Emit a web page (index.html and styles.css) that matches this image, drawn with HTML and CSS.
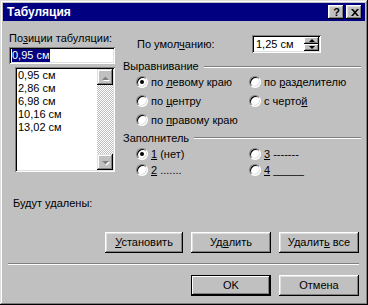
FILE: index.html
```html
<!DOCTYPE html>
<html lang="ru">
<head>
<meta charset="utf-8">
<title>Табуляция</title>
<link rel="stylesheet" href="styles.css">
</head>
<body>
<div class="window">
  <div class="titlebar">
    <span class="title">Табуляция</span>
    <div class="caps">
      <span class="cap help">?</span>
      <span class="cap close"><svg width="8" height="7" viewBox="0 0 8 7"><path d="M0 0h2l2 2.2L6 0h2L5 3.5 8 7H6L4 4.8 2 7H0l3-3.5z" fill="#000"/></svg></span>
    </div>
  </div>
  <div class="body">
    <div class="top">
      <div class="left">
        <div class="lbl">По<u>з</u>иции табуляции:</div>
        <div class="field"><span class="sel">0,95 см</span></div>
        <div class="list">
          <div class="items">
            <div>0,95 см</div>
            <div>2,86 см</div>
            <div>6,98 см</div>
            <div>10,16 см</div>
            <div>13,02 см</div>
          </div>
          <div class="vscroll">
            <div class="sbtn"><svg width="12" height="12" viewBox="0 0 12 12"><polygon points="3,9 10,9 6.5,5.5" fill="#fff" transform="translate(1 1)"/><polygon points="3,9 10,9 6.5,5.5" fill="#808080"/></svg></div>
            <div class="track"></div>
            <div class="sbtn"><svg width="12" height="12" viewBox="0 0 12 12"><polygon points="3,5 10,5 6.5,8.5" fill="#fff" transform="translate(1 1)"/><polygon points="3,5 10,5 6.5,8.5" fill="#808080"/></svg></div>
          </div>
        </div>
        <div class="removed">Будут удалены:</div>
      </div>
      <div class="right">
        <div class="default-row">
          <span class="dlabel">По умол<u>ч</u>анию:</span>
          <div class="spin">
            <span class="spin-val">1,25 см</span>
            <div class="spin-btns">
              <span class="sb"><span class="tri-up"></span></span>
              <span class="sb"><span class="tri-down"></span></span>
            </div>
          </div>
        </div>
        <div class="group-head"><span>Выравнивание</span><span class="etch"></span></div>
        <div class="options align">
          <div class="opt"><span class="radio on"></span><span>по <u>л</u>евому краю</span></div>
          <div class="opt"><span class="radio"></span><span>по <u>р</u>азделителю</span></div>
          <div class="opt"><span class="radio"></span><span>по <u>ц</u>ентру</span></div>
          <div class="opt"><span class="radio"></span><span>с черто<u>й</u></span></div>
          <div class="opt"><span class="radio"></span><span>по <u>п</u>равому краю</span></div>
        </div>
        <div class="group-head fill-head"><span>Заполнитель</span><span class="etch"></span></div>
        <div class="options fill">
          <div class="opt"><span class="radio on"></span><span><u>1</u> (нет)</span></div>
          <div class="opt"><span class="radio"></span><span><u>3</u> -------</span></div>
          <div class="opt"><span class="radio"></span><span><u>2</u> .......</span></div>
          <div class="opt"><span class="radio"></span><span><u>4</u> _____</span></div>
        </div>
      </div>
    </div>
    <div class="actions">
      <div class="btn w78"><span><u>У</u>становить</span></div>
      <div class="btn"><span>Уд<u>а</u>лить</span></div>
      <div class="btn"><span>Удалит<u>ь</u> все</span></div>
    </div>
    <div class="sep"></div>
    <div class="footer">
      <div class="btn default"><span>OK</span></div>
      <div class="btn"><span>Отмена</span></div>
    </div>
  </div>
</div>
</body>
</html>
```

FILE: styles.css
```css
* { box-sizing: border-box; }
html, body { margin: 0; padding: 0; }
body {
  font-family: "Liberation Sans", Arial, sans-serif;
  font-size: 11px;
  color: #000;
  background: #c0c0c0;
}
u { text-decoration: underline; text-underline-offset: 1px; }

.window {
  width: 368px;
  height: 305px;
  background: #c0c0c0;
  padding: 3px;
  box-shadow: inset -1px -1px #000, inset 1px 1px #dfdfdf,
              inset -2px -2px #808080, inset 2px 2px #fff;
}

.titlebar {
  height: 18px;
  background: #000080;
  display: flex;
  align-items: center;
  justify-content: space-between;
  padding: 0 3px 0 4px;
}
.title { color: #fff; font-weight: bold; font-size: 12px; line-height: 14px; }
.caps { display: flex; gap: 2px; }
.cap {
  width: 16px; height: 14px;
  background: #c0c0c0;
  display: flex; align-items: center; justify-content: center;
  box-shadow: inset -1px -1px #000, inset 1px 1px #fff,
              inset -2px -2px #808080, inset 2px 2px #dfdfdf;
}
.help { font-weight: bold; font-size: 11px; line-height: 12px; padding-left: 1px; }
.close svg { display: block; margin-left: 1px; }

.body { display: flex; flex-direction: column; }

.top { display: flex; padding: 11px 0 0 6px; gap: 8px; align-items: flex-start; }
.left { width: 106px; display: flex; flex-direction: column; }
.lbl { line-height: 13px; height: 13px; }

.field {
  margin-top: 2px;
  height: 17px;
  background: #fff;
  padding: 2px 3px;
  box-shadow: inset 1px 1px #808080, inset -1px -1px #fff,
              inset 2px 2px #000, inset -2px -2px #dfdfdf;
  line-height: 13px;
}
.sel { background: #000080; color: #fff; display: inline-block; height: 13px; }

.list {
  margin: 3px 0 0 6px;
  width: 100px;
  height: 105px;
  background: #fff;
  padding: 2px;
  display: flex;
  box-shadow: inset 1px 1px #808080, inset -1px -1px #fff,
              inset 2px 2px #000, inset -2px -2px #dfdfdf;
}
.items { flex: 1; padding-left: 1px; line-height: 13px; }
.vscroll { width: 16px; display: flex; flex-direction: column; }
.sbtn {
  width: 16px; height: 16px; background: #c0c0c0;
  box-shadow: inset -1px -1px #000, inset 1px 1px #dfdfdf,
              inset -2px -2px #808080, inset 2px 2px #fff;
  display: flex; align-items: center; justify-content: center;
}
.sbtn svg { display: block; }
.track {
  flex: 1;
  background: repeating-conic-gradient(#c0c0c0 0% 25%, #fff 0% 50%) 0 0 / 2px 2px;
}

.removed { margin: 24.5px 0 0 4px; line-height: 13px; }

.right { width: 238px; margin-top: 3px; display: flex; flex-direction: column; }
.default-row { display: flex; align-items: center; height: 18px; padding-left: 14px; }
.dlabel { width: 115px; line-height: 13px; }
.spin {
  width: 69px; height: 18px;
  background: #fff;
  padding: 2px;
  display: flex; align-items: center;
  box-shadow: inset 1px 1px #808080, inset -1px -1px #fff,
              inset 2px 2px #000, inset -2px -2px #dfdfdf;
}
.spin-val { flex: 1; padding-left: 2px; line-height: 13px; }
.spin-btns { width: 15px; height: 14px; display: flex; flex-direction: column; }
.sb {
  flex: 1; background: #c0c0c0;
  display: flex; align-items: center; justify-content: center;
  box-shadow: inset -1px -1px #000, inset 1px 1px #fff,
              inset -2px -2px #808080;
}
.tri-up { width: 0; height: 0; border-left: 3px solid transparent; border-right: 3px solid transparent; border-bottom: 3px solid #000; }
.tri-down { width: 0; height: 0; border-left: 3px solid transparent; border-right: 3px solid transparent; border-top: 3px solid #000; }

.group-head { display: flex; align-items: center; margin-top: 7px; line-height: 13px; height: 13px; }
.fill-head { margin-top: 2.5px; }
.etch { flex: 1; margin-left: 5px; height: 2px; border-top: 1px solid #808080; border-bottom: 1px solid #fff; }

.options { display: grid; grid-template-columns: 113px 1fr; padding-left: 13px; }
.align { grid-auto-rows: 18px; row-gap: 1px; }
.fill { grid-auto-rows: 16px; margin-top: 1.5px; }
.opt { display: flex; align-items: center; line-height: 13px; white-space: nowrap; }

.radio {
  width: 12px; height: 12px;
  border-radius: 50%;
  border: 1px solid;
  border-color: #808080 #fff #fff #808080;
  background: #fff;
  box-shadow: inset 1px 1px #000, inset -1px -1px #dfdfdf;
  margin-right: 3px;
  display: flex; align-items: center; justify-content: center;
  flex: none;
}
.radio.on::after { content: ""; width: 4px; height: 4px; border-radius: 50%; background: #000; }

.actions { display: flex; justify-content: flex-end; gap: 8px; padding-right: 6px; margin-top: 22.5px; }
.btn {
  width: 80px; height: 21px;
  background: #c0c0c0;
  display: flex; align-items: center; justify-content: center;
  line-height: 13px;
  box-shadow: inset -1px -1px #000, inset 1px 1px #fff,
              inset -2px -2px #808080, inset 2px 2px #dfdfdf;
}
.btn.w78 { width: 78px; }
.btn.default {
  box-shadow: inset 0 0 0 1px #000, inset -2px -2px #000, inset 2px 2px #fff,
              inset -3px -3px #808080;
}
.sep { margin: 10px 6px 0 5px; height: 2px; border-top: 1px solid #808080; border-bottom: 1px solid #fff; }
.footer { display: flex; justify-content: flex-end; gap: 8px; padding-right: 6px; margin-top: 10px; }
```
